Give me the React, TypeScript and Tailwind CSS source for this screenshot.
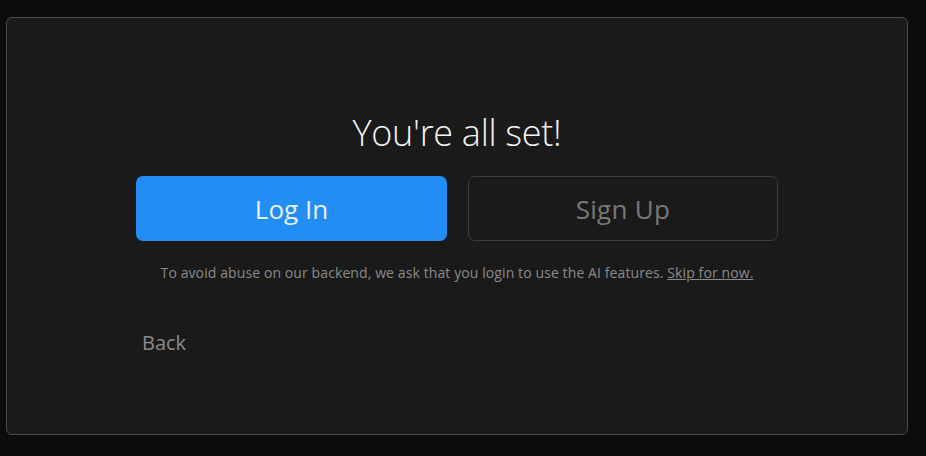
import React from "react";

export default function App() {
  return (
    <div
      className="w-[926px] h-[456px] bg-[#0c0c0c] pt-[17px] pl-[6px]"
      style={{ fontFamily: '"Open Sans", "Noto Sans", sans-serif' }}
    >
      <div className="w-[902px] h-[418px] bg-[#1a1a1a] border border-[#4b4b4b] rounded-[6px] flex flex-col items-center">
        <div className="w-[642px] mt-[92px] flex flex-col">
          <h1 className="text-center text-[36px] leading-[46px] font-light text-[#f2f2f2] tracking-[-0.3px]">
            You're all set!
          </h1>
          <div className="mt-[20px] flex gap-[21px]">
            <button className="w-[311px] h-[65px] pt-[2px] rounded-[7px] bg-[#228ef4] text-[#e8eefa] text-[26px]">
              Log In
            </button>
            <button className="w-[310px] h-[65px] pt-[2px] rounded-[7px] border border-[#3c3c3c] text-[#787878] text-[26px] tracking-[0.3px]">
              Sign Up
            </button>
          </div>
          <p className="mt-[22px] text-center text-[14px] leading-[20px] text-[#8a8a8a] tracking-[0.1px]">
            To avoid abuse on our backend, we ask that you login to use the AI features.{" "}
            <span className="underline">Skip for now.</span>
          </p>
          <div className="mt-[47px] pl-[6px] text-[20px] leading-[26px] text-[#8a8a8a]">Back</div>
        </div>
      </div>
    </div>
  );
}
